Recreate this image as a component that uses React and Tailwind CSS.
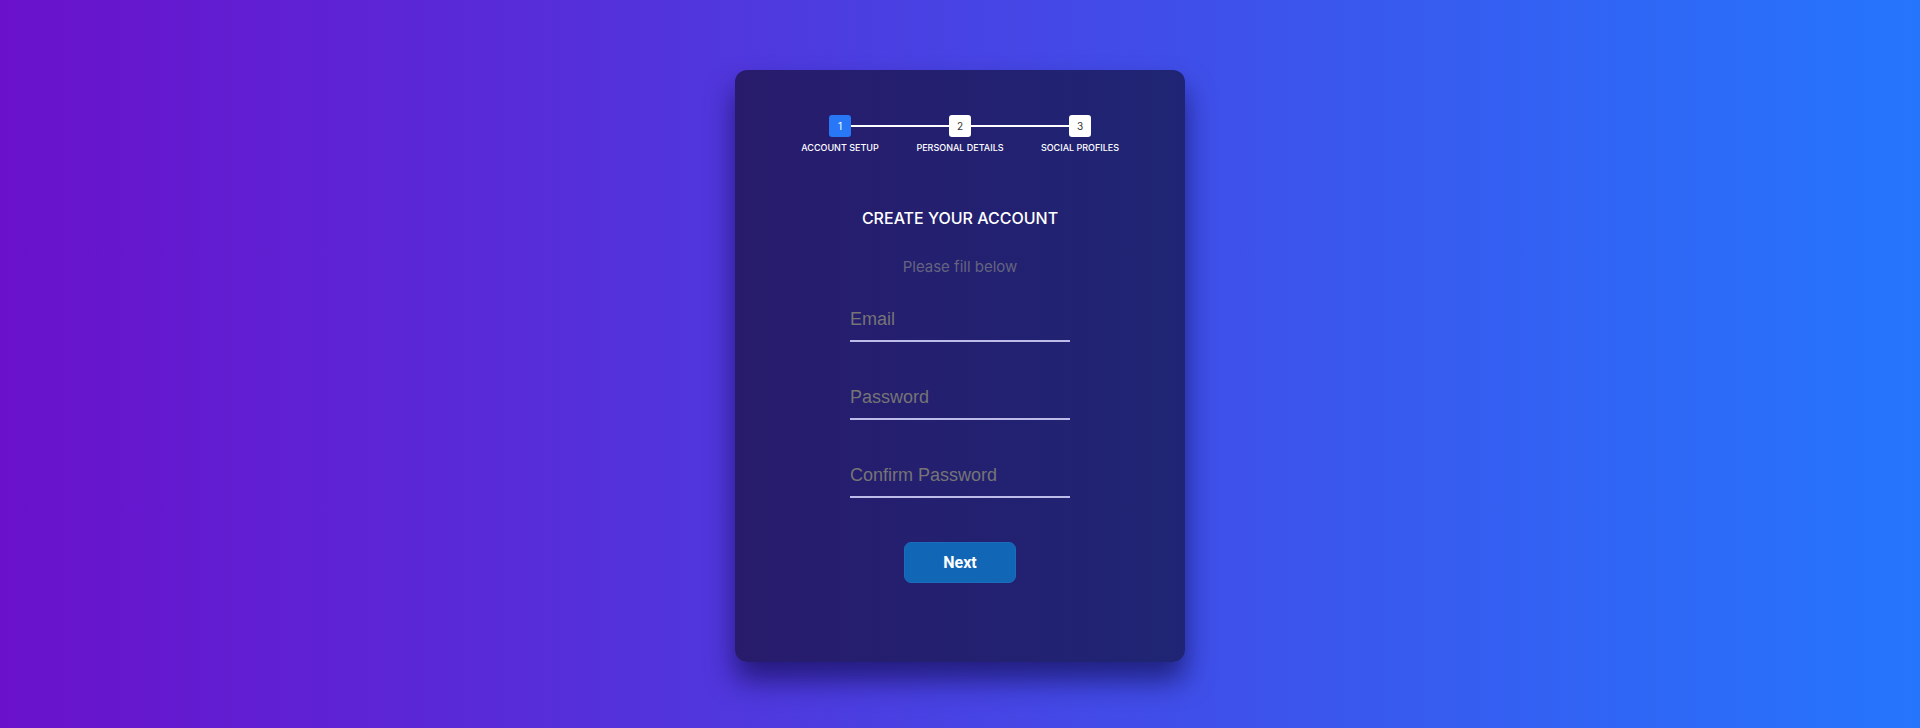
import { useState } from "react";

const steps = [
  { n: 1, label: "Account Setup" },
  { n: 2, label: "Personal Details" },
  { n: 3, label: "Social Profiles" },
];

export default function App() {
  const [email, setEmail] = useState("");
  const [password, setPassword] = useState("");
  const [confirm, setConfirm] = useState("");
  const current = 1;

  return (
    <div className="min-h-screen h-[728px] bg-[linear-gradient(to_right,#6a11cb,#2575fc)] flex justify-center pt-[70px]">
      <div className="w-[450px] h-[592px] rounded-xl bg-[linear-gradient(to_right,#281b6c,#1f2574)] shadow-[0_18px_28px_rgba(10,5,60,0.6)] flex flex-col items-center pt-[45px] font-['Inter',sans-serif]">
        {/* Stepper */}
        <div className="grid grid-cols-3 w-[360px]">
          {steps.map((s, i) => (
            <div key={s.n} className="flex flex-col items-center">
              <div className="flex items-center w-full">
                <div
                  className={
                    i === 0 ? "flex-1 h-[2px]" : "flex-1 h-[2px] bg-white"
                  }
                />
                <div
                  className={
                    s.n === current
                      ? "w-[22px] h-[22px] rounded-[3px] bg-[#2777f7] text-white text-[10px] flex items-center justify-center"
                      : "w-[22px] h-[22px] rounded-[3px] bg-white text-[#333] text-[10px] flex items-center justify-center"
                  }
                >
                  {s.n}
                </div>
                <div
                  className={
                    i === steps.length - 1
                      ? "flex-1 h-[2px]"
                      : "flex-1 h-[2px] bg-white"
                  }
                />
              </div>
              <div className="mt-[5px] text-[9px] leading-[12px] font-medium uppercase text-white whitespace-nowrap">
                {s.label}
              </div>
            </div>
          ))}
        </div>

        {/* Heading */}
        <h2 className="mt-[52px] text-[16px] leading-[24px] font-medium text-white">
          CREATE YOUR ACCOUNT
        </h2>
        <p className="mt-[27px] text-[15px] leading-[20px] text-[#646480]">
          Please fill below
        </p>

        {/* Form */}
        <form
          className="mt-[22px] flex flex-col gap-[35px] w-[220px]"
          onSubmit={(e) => e.preventDefault()}
        >
          <input
            type="email"
            placeholder="Email"
            value={email}
            onChange={(e) => setEmail(e.target.value)}
            className="w-full bg-transparent py-2.5 text-[18px] leading-[21px] font-['Liberation_Sans',Arial,sans-serif] text-white placeholder:text-[#757575] border-b-2 border-[#bdbbe8] outline-none"
          />
          <input
            type="password"
            placeholder="Password"
            value={password}
            onChange={(e) => setPassword(e.target.value)}
            className="w-full bg-transparent py-2.5 text-[18px] leading-[21px] font-['Liberation_Sans',Arial,sans-serif] text-white placeholder:text-[#757575] border-b-2 border-[#bdbbe8] outline-none"
          />
          <input
            type="password"
            placeholder="Confirm Password"
            value={confirm}
            onChange={(e) => setConfirm(e.target.value)}
            className="w-full bg-transparent py-2.5 text-[18px] leading-[21px] font-['Liberation_Sans',Arial,sans-serif] text-white placeholder:text-[#757575] border-b-2 border-[#bdbbe8] outline-none"
          />
        </form>

        <button
          type="button"
          className="mt-[44px] w-[112px] h-[41px] rounded-[7px] bg-[#1266b6] border border-[#1a6cbd] text-white text-[16px] font-bold font-['Roboto',sans-serif]"
        >
          Next
        </button>
      </div>
    </div>
  );
}
